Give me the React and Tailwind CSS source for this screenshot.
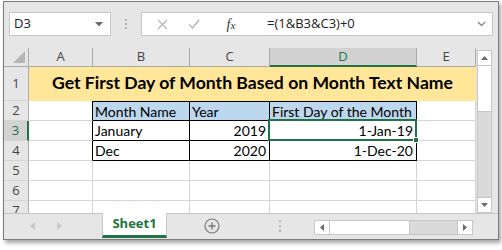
import React from "react";

const ui = { fontFamily: '"Open Sans", "Noto Sans", sans-serif' };
const cellFont = { fontFamily: 'Lato, "Open Sans", sans-serif' };

const RowHead = ({ n, active, h }) => (
  <div
    className={`${h} w-[25px] shrink-0 flex items-center justify-center text-[13px] border-b border-[#d4d4d4] ${
      active
        ? "bg-[#d2d2d2] text-[#217346] border-r-2 border-r-[#217346]"
        : "bg-[#e6e6e6] text-[#444] border-r border-r-[#ababab]"
    }`}
    style={ui}
  >
    {n}
  </div>
);

const FormulaBar = () => (
  <div className="h-[40px] flex items-start pt-[10px] pl-[5px] shrink-0">
    <div
      className="w-[102px] h-[24px] bg-white border border-[#c6c6c6] flex items-center justify-between pl-[4px] pr-[7px] text-[13px] text-[#222]"
      style={ui}
    >
      <span>D3</span>
      <svg width="8" height="5" viewBox="0 0 8 5">
        <path d="M0 0h8L4 4.5z" fill="#6b6b6b" />
      </svg>
    </div>
    <div className="w-[30px] h-[24px] flex flex-col items-center justify-center gap-[2px]">
      <span className="w-[2px] h-[2px] bg-[#b0b0b0]" />
      <span className="w-[2px] h-[2px] bg-[#b0b0b0]" />
      <span className="w-[2px] h-[2px] bg-[#b0b0b0]" />
    </div>
    <div className="w-[352px] h-[24px] bg-white border border-[#c6c6c6] flex items-center pr-[6px]">
      <div className="w-[40px] flex justify-center">
        <svg width="11" height="11" viewBox="0 0 11 11">
          <path d="M1 1l9 9M10 1l-9 9" stroke="#b4b4b4" strokeWidth="1.2" />
        </svg>
      </div>
      <div className="w-[24px] flex justify-center">
        <svg width="12" height="10" viewBox="0 0 12 10">
          <path d="M1 5.5l3.5 3.5L11 1" stroke="#b4b4b4" strokeWidth="1.4" fill="none" />
        </svg>
      </div>
      <div
        className="w-[50px] flex justify-center text-[14px] italic text-[#333]"
        style={{ fontFamily: '"Liberation Serif", serif' }}
      >
        <span>
          f<span className="text-[11px]">x</span>
        </span>
      </div>
      <div className="flex-1 text-[13px] text-[#222] pl-[11px]" style={ui}>
        =(1&amp;B3&amp;C3)+0
      </div>
      <svg width="9" height="6" viewBox="0 0 9 6">
        <path d="M1 1l3.5 3.5L8 1" stroke="#8a8a8a" strokeWidth="1.4" fill="none" />
      </svg>
    </div>
  </div>
);

const ColHeader = () => (
  <div className="h-[19px] flex text-[13px] text-[#444]" style={ui}>
    <div className="w-[25px] h-full bg-[#e6e6e6] border-r border-b border-[#ababab] flex items-end justify-end pr-[3px] pb-[3px]">
      <svg width="12" height="12" viewBox="0 0 12 12">
        <path d="M12 0v12H0z" fill="#b5b5b5" />
      </svg>
    </div>
    <div className="w-[64px] bg-[#e6e6e6] border-r border-b border-[#ababab] flex items-center justify-center">A</div>
    <div className="w-[97px] bg-[#e6e6e6] border-r border-b border-[#ababab] flex items-center justify-center">B</div>
    <div className="w-[80px] bg-[#e6e6e6] border-r border-b border-[#ababab] flex items-center justify-center">C</div>
    <div className="w-[147px] bg-[#d2d2d2] border-r border-r-[#ababab] border-b-2 border-b-[#217346] text-[#217346] flex items-center justify-center">D</div>
    <div className="w-[59px] bg-[#e6e6e6] border-r border-b border-[#ababab] flex items-center justify-center">E</div>
  </div>
);

const Grid = () => (
  <div className="w-[472px] bg-white" style={cellFont}>
    <ColHeader />
    {/* row 1: title */}
    <div className="h-[34px] flex">
      <RowHead n="1" h="h-[34px]" />
      <div className="w-[447px] h-full bg-[#ffe699] flex items-end justify-center pb-[5px] text-[17.6px] font-bold text-black">
        Get First Day of Month Based on Month Text Name
      </div>
    </div>
    {/* row 2 */}
    <div className="h-[20px] flex text-[14px] text-black">
      <RowHead n="2" h="h-[20px]" />
      <div className="w-[64px] border-r border-r-black border-b border-b-[#d4d4d4]" />
      <div className="w-[97px] bg-[#bdd7ee] border-t border-b border-r border-black flex items-center pl-[2px]">Month Name</div>
      <div className="w-[80px] bg-[#bdd7ee] border-t border-b border-r border-black flex items-center pl-[2px]">Year</div>
      <div className="w-[147px] bg-[#bdd7ee] border-t border-b border-r border-black flex items-center pl-[2px]">First Day of the Month</div>
      <div className="w-[59px] border-r border-b border-[#d4d4d4]" />
    </div>
    {/* row 3 */}
    <div className="h-[20px] flex text-[14px] text-black">
      <RowHead n="3" h="h-[20px]" active />
      <div className="w-[64px] border-r border-r-black border-b border-b-[#d4d4d4]" />
      <div className="w-[97px] border-b border-r border-black flex items-center pl-[2px]">January</div>
      <div className="w-[80px] border-b border-r border-black flex items-center justify-end pr-[3px]">2019</div>
      <div className="relative w-[147px] border-b border-r border-black flex items-center justify-end pr-[3px]">
        1-Jan-19
        <div className="absolute -left-[2px] -top-[2px] -right-[1px] -bottom-[1px] border-2 border-[#217346]" />
        <div className="absolute -right-[3px] -bottom-[3px] w-[6px] h-[6px] bg-[#217346] border border-white" />
      </div>
      <div className="w-[59px] border-r border-b border-[#d4d4d4]" />
    </div>
    {/* row 4 */}
    <div className="h-[20px] flex text-[14px] text-black">
      <RowHead n="4" h="h-[20px]" />
      <div className="w-[64px] border-r border-r-black border-b border-b-[#d4d4d4]" />
      <div className="w-[97px] border-b border-r border-black flex items-center pl-[2px]">Dec</div>
      <div className="w-[80px] border-b border-r border-black flex items-center justify-end pr-[3px]">2020</div>
      <div className="w-[147px] border-b border-r border-black flex items-center justify-end pr-[3px]">1-Dec-20</div>
      <div className="w-[59px] border-r border-b border-[#d4d4d4]" />
    </div>
    {["5", "6", "7"].map((n) => (
      <div key={n} className="h-[20px] flex">
        <RowHead n={n} h="h-[20px]" />
        <div className="w-[64px] border-r border-b border-[#d4d4d4]" />
        <div className="w-[97px] border-r border-b border-[#d4d4d4]" />
        <div className="w-[80px] border-r border-b border-[#d4d4d4]" />
        <div className="w-[147px] border-r border-b border-[#d4d4d4]" />
        <div className="w-[59px] border-r border-b border-[#d4d4d4]" />
      </div>
    ))}
  </div>
);

const VScroll = () => (
  <div className="w-[15px] mt-[2px] ml-[1px] flex flex-col border border-[#c6c6c6] bg-[#dadada]">
    <div className="h-[15px] bg-white border-b border-[#c6c6c6] flex items-center justify-center">
      <svg width="7" height="4" viewBox="0 0 7 4">
        <path d="M0 4h7L3.5 0z" fill="#6b6b6b" />
      </svg>
    </div>
    <div className="h-[46px] bg-white border-b border-[#c6c6c6]" />
    <div className="flex-1" />
    <div className="h-[15px] bg-white border-t border-[#c6c6c6] flex items-center justify-center">
      <svg width="7" height="4" viewBox="0 0 7 4">
        <path d="M0 0h7L3.5 4z" fill="#6b6b6b" />
      </svg>
    </div>
  </div>
);

const TabBar = () => (
  <div className="h-[25px] flex items-stretch shrink-0 border-t border-[#c6c6c6]">
    <div className="w-[98px] flex items-center pl-[26px] gap-[22px]">
      <svg width="5" height="8" viewBox="0 0 5 8">
        <path d="M5 0v8L0 4z" fill="#c8c8c8" />
      </svg>
      <svg width="5" height="8" viewBox="0 0 5 8">
        <path d="M0 0v8l5-4z" fill="#c8c8c8" />
      </svg>
    </div>
    <div
      className="w-[65px] -mt-px bg-white border-x border-[#c6c6c6] border-b-[3px] border-b-[#217346] flex items-center justify-center text-[13px] font-bold text-[#217346]"
      style={ui}
    >
      Sheet1
    </div>
    <div className="w-[90px] flex items-center justify-center">
      <svg width="16" height="16" viewBox="0 0 16 16">
        <circle cx="8" cy="8" r="7" fill="none" stroke="#7a7a7a" strokeWidth="1.2" />
        <path d="M8 4.5v7M4.5 8h7" stroke="#7a7a7a" strokeWidth="1.4" />
      </svg>
    </div>
    <div className="w-[45px] flex flex-col items-center justify-center gap-[3px]">
      <span className="w-[2px] h-[2px] bg-[#b0b0b0]" />
      <span className="w-[2px] h-[2px] bg-[#b0b0b0]" />
      <span className="w-[2px] h-[2px] bg-[#b0b0b0]" />
    </div>
    <div className="w-[159px] h-[15px] mt-[6px] ml-[12px] flex border border-[#c6c6c6] bg-[#dadada]">
      <div className="w-[15px] bg-white border-r border-[#c6c6c6] flex items-center justify-center">
        <svg width="4" height="7" viewBox="0 0 4 7">
          <path d="M4 0v7L0 3.5z" fill="#6b6b6b" />
        </svg>
      </div>
      <div className="w-[80px] bg-white border-r border-[#c6c6c6]" />
      <div className="flex-1" />
      <div className="w-[15px] bg-white border-l border-[#c6c6c6] flex items-center justify-center">
        <svg width="4" height="7" viewBox="0 0 4 7">
          <path d="M0 0v7l4-3.5z" fill="#6b6b6b" />
        </svg>
      </div>
    </div>
  </div>
);

export default function App() {
  return (
    <div className="w-[502px] h-[250px] bg-white pl-[3px] pt-[1px] overflow-hidden">
      <div className="w-[496px] h-[239px] border border-[#7a7a7a] bg-[#e6e6e6] shadow-[2px_3px_4px_rgba(0,0,0,0.35)] flex flex-col overflow-hidden">
        <FormulaBar />
        <div className="h-[171px] flex pt-[6px] overflow-hidden">
          <div className="h-[165px] overflow-hidden">
            <Grid />
          </div>
          <VScroll />
        </div>
        <TabBar />
      </div>
    </div>
  );
}
